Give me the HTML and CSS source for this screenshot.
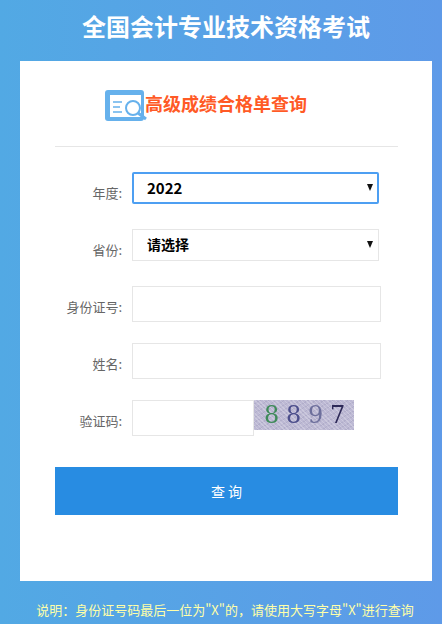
FILE: index.html
```html
<!DOCTYPE html>
<html lang="zh-CN">
<head>
    <meta charset="UTF-8">
    <meta name="viewport" content="width=device-width, initial-scale=1.0">
    <title>全国会计专业技术资格考试</title>
    <link rel="stylesheet" href="styles.css">
</head>
<body>
    <h1 class="page-title">全国会计专业技术资格考试</h1>

    <div class="card">
        <div class="card-head">
            <svg class="head-icon" width="42" height="32" viewBox="0 0 42 32">
                <rect x="0" y="0" width="39" height="31" rx="3" fill="#66b1ec"/>
                <rect x="5" y="5" width="31" height="22" fill="#fff"/>
                <path d="M8 12h9M8 17h7M8 22h9" stroke="#66b1ec" stroke-width="1.6" fill="none"/>
                <circle cx="28" cy="18" r="7" stroke="#66b1ec" stroke-width="2" fill="#fff"/>
                <path d="M33 23l8 6" stroke="#66b1ec" stroke-width="3" fill="none"/>
            </svg>
            <h2 class="head-text">高级成绩合格单查询</h2>
        </div>

        <form class="form">
            <div class="row row-year">
                <label class="label">年度:</label>
                <div class="select-wrap">
                    <select class="field select select-focus">
                        <option>2022</option>
                    </select>
                    <span class="arrow"></span>
                </div>
            </div>
            <div class="row row-province">
                <label class="label">省份:</label>
                <div class="select-wrap">
                    <select class="field select">
                        <option>请选择</option>
                    </select>
                    <span class="arrow"></span>
                </div>
            </div>
            <div class="row row-input">
                <label class="label">身份证号:</label>
                <input class="field input" type="text">
            </div>
            <div class="row row-input">
                <label class="label">姓名:</label>
                <input class="field input" type="text">
            </div>
            <div class="row row-code">
                <label class="label">验证码:</label>
                <input class="field input-code" type="text">
                <div class="captcha">
                    <span class="digit d1">8</span>
                    <span class="digit d2">8</span>
                    <span class="digit d3">9</span>
                    <span class="digit d4">7</span>
                </div>
            </div>
            <button class="submit" type="button">查 询</button>
        </form>
    </div>

    <p class="note">说明：身份证号码最后一位为"X"的，请使用大写字母"X"进行查询</p>
</body>
</html>
```

FILE: styles.css
```css
* {
    box-sizing: border-box;
}
html, body {
    height: 624px;
    overflow: hidden;
}
body {
    margin: 0;
    font-family: "Noto Sans CJK SC", "Liberation Sans", sans-serif;
    background: linear-gradient(90deg, #52a9e4, #5e9ae8);
}
.page-title {
    margin: 0 0 0 20px;
    width: 412px;
    height: 61px;
    padding-top: 8px;
    font-size: 24px;
    line-height: 36px;
    font-weight: bold;
    color: #fff;
    text-align: center;
}
.card {
    margin-left: 20px;
    width: 412px;
    height: 520px;
    background: #fff;
    padding: 0 34px 0 35px;
}
.card-head {
    display: flex;
    align-items: flex-start;
    height: 86px;
    padding: 27px 0 0 50px;
    border-bottom: 1px solid #e6e6e6;
}
.head-icon {
    flex: none;
    margin-right: -2px;
    margin-top: 2px;
}
.head-text {
    margin: 0;
    font-size: 18px;
    line-height: 30px;
    font-weight: bold;
    color: #ff5a26;
    white-space: nowrap;
}
.form {
    display: block;
}
.row {
    display: flex;
    align-items: flex-start;
}
.row-year {
    margin-top: 25px;
}
.row-province {
    margin-top: 25px;
}
.row-input {
    margin-top: 25px;
}
.row-input + .row-input {
    margin-top: 21px;
}
.row-code {
    margin-top: 21px;
}
.label {
    flex: none;
    width: 67px;
    margin-right: 10px;
    font-size: 13px;
    line-height: 20px;
    color: #666;
    text-align: right;
    white-space: nowrap;
    padding-top: 11px;
}
.select-wrap {
    position: relative;
    width: 247px;
    height: 32px;
}
.field {
    border: 1px solid #e6e6e6;
    background: #fff;
    outline: none;
    font-family: inherit;
}
.select {
    appearance: none;
    width: 100%;
    height: 32px;
    padding: 0 0 2px 14px;
    border-radius: 0;
    font-size: 14px;
    font-weight: bold;
    color: #000;
}
.select-focus {
    border: 2px solid #4d9ff2;
    padding-left: 13px;
    border-radius: 2px;
    font-size: 15px;
}
.arrow {
    position: absolute;
    right: 6px;
    top: 12px;
    width: 0;
    height: 0;
    border-left: 3.5px solid transparent;
    border-right: 3.5px solid transparent;
    border-top: 7px solid #111;
}
.input {
    width: 249px;
    height: 36px;
}
.input-code {
    flex: none;
    width: 122px;
    height: 36px;
}
.captcha {
    display: flex;
    align-items: center;
    flex: none;
    width: 100px;
    height: 30px;
    padding-left: 10px;
    background-color: #bdb9d4;
    background-image:
        repeating-linear-gradient(45deg, rgba(255, 255, 255, 0.22) 0 1px, transparent 1px 3px),
        repeating-linear-gradient(-30deg, rgba(90, 90, 130, 0.12) 0 1px, transparent 1px 4px);
    font-family: "DejaVu Serif", serif;
    font-size: 24px;
    line-height: 30px;
}
.digit {
    width: 22px;
    filter: blur(0.4px);
}
.d1 {
    color: #3f8a5a;
}
.d2 {
    color: #4d4f8c;
}
.d3 {
    color: #6d6f9c;
}
.d4 {
    color: #2e2a58;
}
.submit {
    display: block;
    width: 343px;
    height: 48px;
    margin-top: 31px;
    border: none;
    background: #288ce2;
    color: #fff;
    font-family: inherit;
    font-size: 14px;
    cursor: pointer;
}
.note {
    margin: 19px 0 0 20px;
    width: 410px;
    font-size: 13px;
    line-height: 20px;
    color: #ffffa8;
    text-align: center;
    white-space: nowrap;
}
```
